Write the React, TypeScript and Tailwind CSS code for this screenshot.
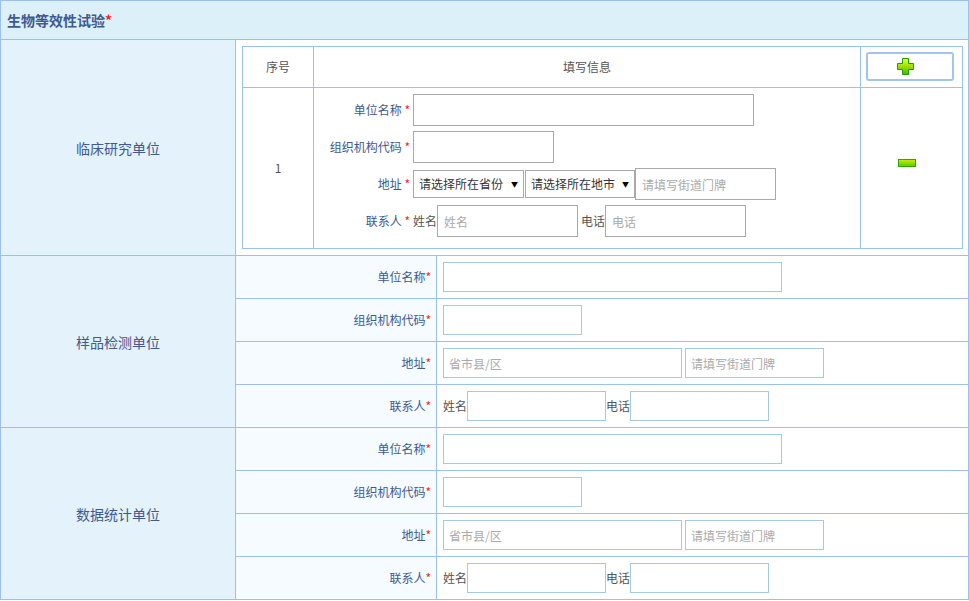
import React from 'react';

const labelColor = 'text-[#40598f]';

function Req() {
  return <span className="text-[#ff2020]">*</span>;
}

function PlusIcon() {
  return (
    <svg width="17" height="17" viewBox="0 0 17 17">
      <defs>
        <linearGradient id="pg" x1="0" y1="0" x2="0" y2="1">
          <stop offset="0" stopColor="#eaff3a" />
          <stop offset="0.5" stopColor="#9be000" />
          <stop offset="1" stopColor="#3cbf00" />
        </linearGradient>
      </defs>
      <path
        d="M5.5 0.5h6v5h5v6h-5v5h-6v-5h-5v-6h5z"
        fill="url(#pg)"
        stroke="#20a000"
        strokeWidth="1"
      />
    </svg>
  );
}

function MinusIcon() {
  return (
    <svg width="18" height="8" viewBox="0 0 18 8">
      <defs>
        <linearGradient id="mg" x1="0" y1="0" x2="0" y2="1">
          <stop offset="0" stopColor="#c8f000" />
          <stop offset="1" stopColor="#5cc800" />
        </linearGradient>
      </defs>
      <rect x="0.5" y="0.5" width="17" height="7" fill="url(#mg)" stroke="#2aa800" strokeWidth="1" />
    </svg>
  );
}

function GrayInput({ w, placeholder }: { w: string; placeholder?: string }) {
  return (
    <input
      placeholder={placeholder}
      className={`${w} h-[32px] border border-[#a9a9a9] bg-white px-[6px] text-[12px] outline-none placeholder:text-[#aaaaaa]`}
    />
  );
}

function FakeSelect({ text, w }: { text: string; w: string }) {
  return (
    <div className={`flex h-[28px] ${w} items-center justify-between border border-[#a9a9a9] bg-white pl-[5px] pr-[5px] text-[12px] text-[#333]`}>
      <span>{text}</span>
      <span className="text-[7px] text-black">▼</span>
    </div>
  );
}

function InnerLine({ label, children }: { label: string; children: React.ReactNode }) {
  return (
    <div className="flex h-[32px] items-center">
      <div className={`w-[99px] pr-[3px] text-right text-[12px] ${labelColor}`}>
        {label} <Req />
      </div>
      <div className="flex items-center">{children}</div>
    </div>
  );
}

function ClinicalSection() {
  return (
    <div className="flex h-[216px] border-b border-[#9dc1ee]">
      <div className={`flex w-[235px] items-center justify-center border-r border-[#9dc1ee] bg-[#e3f2fb] text-[14px] ${labelColor}`}>
        临床研究单位
      </div>
      <div className="flex-1 pl-[6px] pr-[5px] pt-[6px]">
        <div className="border border-[#9dc1ee] bg-white text-[12px] text-[#555]">
          <div className="flex h-[41px] border-b border-[#9dc1ee]">
            <div className="flex w-[71px] items-center justify-center border-r border-[#9dc1ee]">序号</div>
            <div className="flex w-[547px] items-center justify-center border-r border-[#9dc1ee]">填写信息</div>
            <div className="flex flex-1 items-start pl-[5px] pt-[5px]">
              <button className="flex h-[29px] w-[88px] items-center justify-center rounded-[3px] border-2 border-[#a3c4f3] bg-white pr-[9px]">
                <PlusIcon />
              </button>
            </div>
          </div>
          <div className="flex h-[160px]">
            <div className="flex w-[71px] items-center justify-center border-r border-[#9dc1ee]">1</div>
            <div className="flex w-[547px] flex-col gap-[5px] border-r border-[#9dc1ee] pt-[6px]">
              <InnerLine label="单位名称">
                <GrayInput w="w-[341px]" />
              </InnerLine>
              <InnerLine label="组织机构代码">
                <GrayInput w="w-[141px]" />
              </InnerLine>
              <InnerLine label="地址">
                <FakeSelect text="请选择所在省份" w="w-[111px]" />
                <div className="ml-[1px]">
                  <FakeSelect text="请选择所在地市" w="w-[110px]" />
                </div>
                <GrayInput w="w-[141px]" placeholder="请填写街道门牌" />
              </InnerLine>
              <InnerLine label="联系人">
                <span className="text-[#555]">姓名</span>
                <GrayInput w="w-[141px]" placeholder="姓名" />
                <span className="ml-[3px] text-[#555]">电话</span>
                <GrayInput w="w-[141px]" placeholder="电话" />
              </InnerLine>
            </div>
            <div className="flex flex-1 items-center justify-center pb-[10px] pr-[10px]">
              <MinusIcon />
            </div>
          </div>
        </div>
      </div>
    </div>
  );
}

function BlueInput({ w, placeholder }: { w: string; placeholder?: string }) {
  return (
    <input
      placeholder={placeholder}
      className={`${w} h-[30px] border border-[#a6c9e2] bg-white px-[5px] text-[12px] outline-none placeholder:text-[#aaaaaa]`}
    />
  );
}

function Row({ label, last, children }: { label: string; last?: boolean; children: React.ReactNode }) {
  return (
    <div className={last ? 'flex h-[42px]' : 'flex h-[43px] border-b border-[#9dc1ee]'}>
      <div className={`flex w-[201px] items-center justify-end border-r border-[#9dc1ee] bg-[#f5fbff] pr-[5px] text-[12px] ${labelColor}`}>
        {label}
        <Req />
      </div>
      <div className="flex flex-1 items-center pl-[6px] text-[12px] text-[#555]">{children}</div>
    </div>
  );
}

function UnitSection({ title, last }: { title: string; last?: boolean }) {
  return (
    <div className={last ? 'flex' : 'flex border-b border-[#9dc1ee]'}>
      <div className={`flex w-[235px] items-center justify-center border-r border-[#9dc1ee] bg-[#e3f2fb] text-[14px] ${labelColor}`}>
        {title}
      </div>
      <div className="flex-1">
        <Row label="单位名称">
          <BlueInput w="w-[339px]" />
        </Row>
        <Row label="组织机构代码">
          <BlueInput w="w-[139px]" />
        </Row>
        <Row label="地址">
          <BlueInput w="w-[239px]" placeholder="省市县/区" />
          <div className="ml-[3px]">
            <BlueInput w="w-[139px]" placeholder="请填写街道门牌" />
          </div>
        </Row>
        <Row label="联系人" last>
          <span>姓名</span>
          <BlueInput w="w-[139px]" />
          <span>电话</span>
          <BlueInput w="w-[139px]" />
        </Row>
      </div>
    </div>
  );
}

export default function App() {
  return (
    <div className="h-[601px] w-[969px] bg-white font-['Microsoft_YaHei','Noto_Sans_CJK_SC',sans-serif] leading-none">
      <div className="w-[969px] border border-[#9dc1ee]">
        <div className="flex h-[39px] items-center border-b border-[#9dc1ee] bg-[#dcf0fa] pl-[6px] text-[14px] font-bold text-[#40598f]">
          生物等效性试验
          <Req />
        </div>
        <ClinicalSection />
        <UnitSection title="样品检测单位" />
        <UnitSection title="数据统计单位" last />
      </div>
    </div>
  );
}
